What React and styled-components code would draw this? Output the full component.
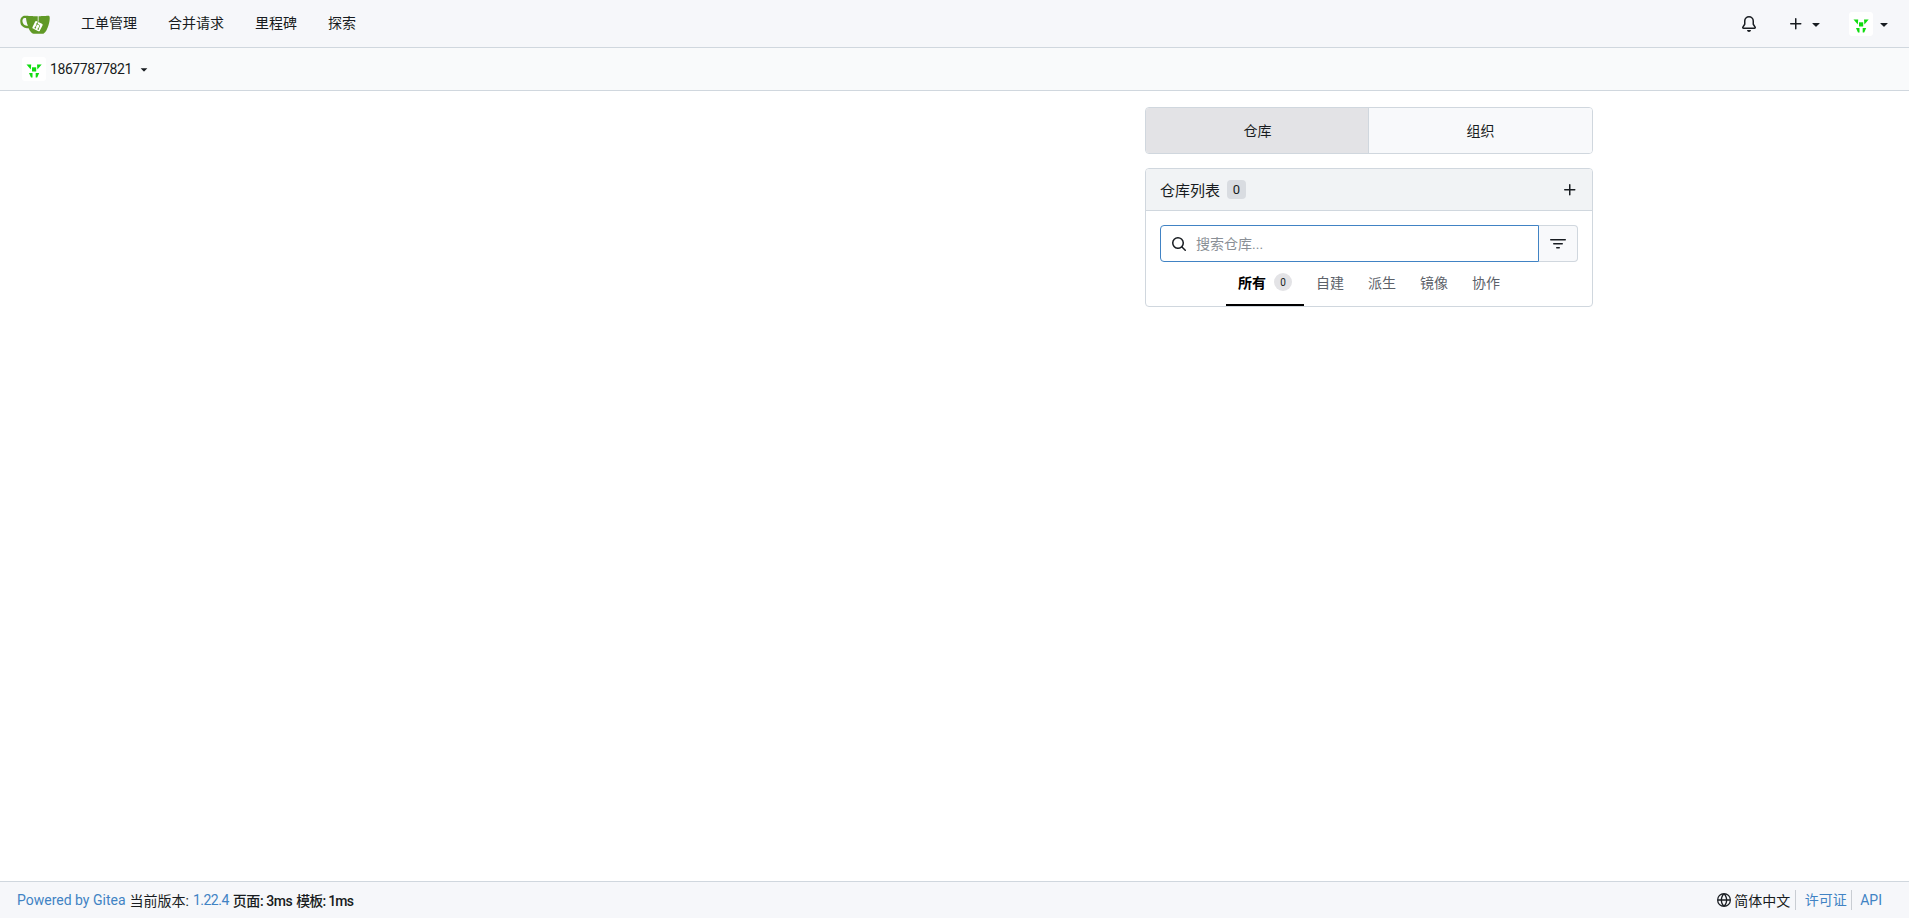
import styled, { createGlobalStyle } from "styled-components";

const GlobalStyle = createGlobalStyle`
  html, body {
    margin: 0;
    padding: 0;
    background: #ffffff;
  }
  body {
    font-family: Roboto, "Noto Sans CJK SC", sans-serif;
    font-size: 14px;
    color: #181c21;
  }
  * {
    box-sizing: border-box;
  }
`;

const paths = {
  bell: "M8 16a2 2 0 0 0 1.985-1.75c.017-.137-.097-.25-.235-.25h-3.5c-.138 0-.252.113-.235.25A2 2 0 0 0 8 16ZM3 5a5 5 0 0 1 10 0v2.947c0 .05.015.098.042.139l1.703 2.555A1.519 1.519 0 0 1 13.482 13H2.518a1.516 1.516 0 0 1-1.263-2.36l1.703-2.554A.255.255 0 0 0 3 7.947Zm5-3.5A3.5 3.5 0 0 0 4.5 5v2.947c0 .346-.102.683-.294.97l-1.703 2.556a.017.017 0 0 0-.003.01l.001.006c0 .002.002.004.004.006l.006.004.007.001h10.964l.007-.001.006-.004.004-.006.001-.007a.017.017 0 0 0-.003-.01l-1.703-2.554a1.745 1.745 0 0 1-.294-.97V5A3.5 3.5 0 0 0 8 1.5Z",
  plus: "M7.75 2a.75.75 0 0 1 .75.75V7h4.25a.75.75 0 0 1 0 1.5H8.5v4.25a.75.75 0 0 1-1.5 0V8.5H2.75a.75.75 0 0 1 0-1.5H7V2.75A.75.75 0 0 1 7.75 2Z",
  search: "M10.68 11.74a6 6 0 0 1-7.922-8.982 6 6 0 0 1 8.982 7.922l3.04 3.04a.749.749 0 0 1-.326 1.275.749.749 0 0 1-.734-.215ZM11.5 7a4.499 4.499 0 1 0-8.997 0A4.499 4.499 0 0 0 11.5 7Z",
  filter: "M.75 3h14.5a.75.75 0 0 1 0 1.5H.75a.75.75 0 0 1 0-1.5ZM3 7.75A.75.75 0 0 1 3.75 7h8.5a.75.75 0 0 1 0 1.5h-8.5A.75.75 0 0 1 3 7.75Zm3 4a.75.75 0 0 1 .75-.75h2.5a.75.75 0 0 1 0 1.5h-2.5a.75.75 0 0 1-.75-.75Z",
  globe: "M8 0a8 8 0 1 1 0 16A8 8 0 0 1 8 0ZM5.78 8.75a9.64 9.64 0 0 0 1.363 4.177c.255.426.542.832.857 1.215.245-.296.551-.705.857-1.215A9.64 9.64 0 0 0 10.22 8.75Zm4.44-1.5a9.64 9.64 0 0 0-1.363-4.177c-.307-.51-.612-.919-.857-1.215a9.927 9.927 0 0 0-.857 1.215A9.64 9.64 0 0 0 5.78 7.25Zm-5.944 1.5H1.543a6.507 6.507 0 0 0 4.666 5.5c-.123-.181-.24-.365-.352-.552-.715-1.192-1.437-2.874-1.581-4.948Zm-2.733-1.5h2.733c.144-2.074.866-3.756 1.58-4.948.12-.197.237-.381.353-.552a6.507 6.507 0 0 0-4.666 5.5Zm10.181 1.5c-.144 2.074-.866 3.756-1.58 4.948-.12.197-.237.381-.353.552a6.507 6.507 0 0 0 4.666-5.5Zm2.733-1.5a6.507 6.507 0 0 0-4.666-5.5c.123.181.24.365.353.552.714 1.192 1.436 2.874 1.58 4.948Z",
  caret: "m4.427 7.427 3.396 3.396a.25.25 0 0 0 .354 0l3.396-3.396A.25.25 0 0 0 11.396 7H4.604a.25.25 0 0 0-.177.427Z",
};

function Icon({ name, size = 16 }) {
  return (
    <svg width={size} height={size} viewBox="0 0 16 16" fill="currentColor" style={{ flexShrink: 0 }}>
      <path d={paths[name]} />
    </svg>
  );
}

function GiteaLogo() {
  return (
    <svg width="30" height="30" viewBox="0 0 640 640">
      <path fill="#fff" d="m395.9 484.2-126.9-61c-12.5-6-17.9-21.2-11.8-33.8l61-126.9c6-12.5 21.2-17.9 33.8-11.8 17.2 8.3 27.1 13 27.1 13l-.1-109.2 16.7-.1.1 117.1s57.4 24.2 83.1 40.1c3.7 2.3 10.2 6.8 12.9 14.4 2.1 6.1 2 13.1-1 19.3l-61 126.9c-6.2 12.7-21.4 18.1-33.9 12" />
      <path fill="#609926" d="M622.7 149.8c-4.1-4.1-9.6-4-9.6-4s-117.2 6.6-177.9 8c-13.3.3-26.5.6-39.6.7v117.2c-5.5-2.6-11.1-5.3-16.6-7.9 0-36.4-.1-109.2-.1-109.2-29 .4-89.2-2.2-89.2-2.2s-141.4-7.1-156.8-8.5c-9.8-.6-22.5-2.1-39 1.5-8.7 1.8-33.5 7.4-53.8 26.9C-4.9 212.4 6.6 276.2 8 285.8c1.7 11.7 6.9 44.2 31.7 72.5 45.8 56.1 144.4 54.8 144.4 54.8s12.1 28.9 30.6 55.5c25 33.1 50.7 58.9 75.7 62 63 0 188.9-.1 188.9-.1s12 .1 28.3-10.3c14-8.5 26.5-23.4 26.5-23.4S547 483 565 451.5c5.5-9.7 10.1-19.1 14.1-28 0 0 55.2-117.1 55.2-231.1-1.1-34.5-9.6-40.6-11.6-42.6M125.6 353.9c-25.9-8.5-36.9-18.7-36.9-18.7S69.6 321.8 60 295.4c-16.5-44.2-1.4-71.2-1.4-71.2s8.4-22.5 38.5-30c13.8-3.7 31-3.1 31-3.1s7.1 59.4 15.7 94.2c7.2 29.2 24.8 77.7 24.8 77.7s-26.1-3.1-43-9.1m300.3 107.6s-6.1 14.5-19.6 15.4c-5.8.4-10.3-1.2-10.3-1.2s-.3-.1-5.3-2.1l-112.9-55s-10.9-5.7-12.8-15.6c-2.2-8.1 2.7-18.1 2.7-18.1L322 273s4.8-9.7 12.2-13c.6-.3 2.3-1 4.5-1.5 8.1-2.1 18 2.8 18 2.8L467.4 315s12.6 5.7 15.3 16.2c1.9 7.4-.5 14-1.8 17.2-6.3 15.4-55 113.1-55 113.1" />
      <path fill="#609926" d="M326.8 380.1c-8.2.1-15.4 5.8-17.3 13.8s2 16.3 9.1 20c7.7 4 17.5 1.8 22.7-5.4 5.1-7.1 4.3-16.9-1.8-23.1l24-49.1c1.5.1 3.7.2 6.2-.5 4.1-.9 7.1-3.6 7.1-3.6 4.2 1.8 8.6 3.8 13.2 6.1 4.8 2.4 9.3 4.9 13.4 7.3.9.5 1.8 1.1 2.8 1.9 1.6 1.3 3.4 3.1 4.7 5.5 1.9 5.5-1.9 14.9-1.9 14.9-2.3 7.6-18.4 40.6-18.4 40.6-8.1-.2-15.3 5-17.7 12.5-2.6 8.1 1.1 17.3 8.9 21.3s17.4 1.7 22.5-5.3c5-6.8 4.6-16.3-1.1-22.6 1.9-3.7 3.7-7.4 5.6-11.3 5-10.4 13.5-30.4 13.5-30.4.9-1.7 5.7-10.3 2.7-21.3-2.5-11.4-12.6-16.7-12.6-16.7-12.2-7.9-29.2-15.2-29.2-15.2s0-4.1-1.1-7.1c-1.1-3.1-2.8-5.1-3.9-6.3 4.7-9.7 9.4-19.3 14.1-29-4.1-2-8.1-4-12.2-6.1-4.8 9.8-9.7 19.7-14.5 29.5-6.7-.1-12.9 3.5-16.1 9.4-3.4 6.3-2.7 14.1 1.9 19.8z" />
    </svg>
  );
}

function Identicon() {
  return (
    <AvatarBox>
      <svg width="24" height="24" viewBox="0 0 24 24" fill="#0fdc0f">
        <rect x="10" y="10.3" width="4.2" height="4.2" />
        <polygon points="4.5,7.5 9.2,7.5 8.8,12.5" />
        <polygon points="19.7,7.5 15,7.5 15.4,12.5" />
        <polygon points="7,16 10.5,16 10.5,20.5 9,20.5" />
        <polygon points="17.2,16 13.7,16 13.7,20.5 15.2,20.5" />
      </svg>
    </AvatarBox>
  );
}

const navItems = ["工单管理", "合并请求", "里程碑", "探索"];
const repoTabs = ["自建", "派生", "镜像", "协作"];

export default function App() {
  return (
    <Page>
      <GlobalStyle />
      <Navbar>
        <NavLeft>
          <LogoLink>
            <GiteaLogo />
          </LogoLink>
          {navItems.map((item) => (
            <NavItem key={item}>{item}</NavItem>
          ))}
        </NavLeft>
        <NavRight>
          <BellItem>
            <Icon name="bell" />
          </BellItem>
          <IconItem $caretGap={4}>
            <Icon name="plus" />
            <Icon name="caret" />
          </IconItem>
          <IconItem $caretGap={3}>
            <Identicon />
            <Icon name="caret" />
          </IconItem>
        </NavRight>
      </Navbar>

      <SecondaryNav>
        <Identicon />
        <UserName>18677877821</UserName>
        <Icon name="caret" size={14} />
      </SecondaryNav>

      <Main>
        <Container>
          <Sidebar>
            <SwitchTabs>
              <SwitchTab $active>仓库</SwitchTab>
              <SwitchTab>组织</SwitchTab>
            </SwitchTabs>

            <RepoBox>
              <BoxHeader>
                <BoxTitle>
                  仓库列表
                  <CountBadge>0</CountBadge>
                </BoxTitle>
                <Icon name="plus" />
              </BoxHeader>
              <BoxBody>
                <SearchRow>
                  <SearchField>
                    <Icon name="search" />
                    <SearchInput placeholder="搜索仓库..." />
                  </SearchField>
                  <FilterButton>
                    <Icon name="filter" />
                  </FilterButton>
                </SearchRow>
                <RepoTabs>
                  <RepoTab $active>
                    所有
                    <TabCount>0</TabCount>
                  </RepoTab>
                  {repoTabs.map((tab) => (
                    <RepoTab key={tab}>{tab}</RepoTab>
                  ))}
                </RepoTabs>
              </BoxBody>
            </RepoBox>
          </Sidebar>
        </Container>
      </Main>

      <Footer>
        <FooterLeft>
          <FooterLink>Powered by Gitea</FooterLink>
          <span>当前版本:</span>
          <VersionLink>1.22.4</VersionLink>
          <Strong $spacing={-0.45}>页面: 3ms</Strong>
          <Strong $spacing={-0.8}>模板: 1ms</Strong>
        </FooterLeft>
        <FooterRight>
          <Language>
            <Icon name="globe" size={14} />
            简体中文
          </Language>
          <FooterLinkItem>许可证</FooterLinkItem>
          <FooterLinkItem>API</FooterLinkItem>
        </FooterRight>
      </Footer>
    </Page>
  );
}

const Page = styled.div`
  min-height: 100vh;
  display: flex;
  flex-direction: column;
`;

const Navbar = styled.nav`
  height: 48px;
  flex-shrink: 0;
  display: flex;
  align-items: center;
  justify-content: space-between;
  padding: 0 17px 0 20px;
  background: #f6f7fa;
  border-bottom: 1px solid #d0d7de;
`;

const NavLeft = styled.div`
  display: flex;
  align-items: center;
`;

const LogoLink = styled.a`
  width: 30px;
  height: 30px;
  margin-right: 15.5px;
  margin-top: 1px;
  display: flex;
`;

const NavItem = styled.a`
  padding: 0 15.5px;
  line-height: 20px;
  margin-bottom: 1px;
  color: #181c21;
`;

const NavRight = styled.div`
  display: flex;
  align-items: center;
  gap: 25px;
`;

const IconItem = styled.a`
  display: flex;
  align-items: center;
  gap: ${(p) => p.$caretGap}px;
  color: #181c21;
`;

const BellItem = styled.a`
  display: flex;
  margin-right: 6px;
  color: #181c21;
`;

const AvatarBox = styled.span`
  width: 24px;
  height: 24px;
  flex-shrink: 0;
  display: block;
  background: #ffffff;
  border-radius: 3px;

  svg {
    display: block;
  }
`;

const SecondaryNav = styled.div`
  height: 43px;
  flex-shrink: 0;
  display: flex;
  align-items: center;
  padding: 0 0 0 22px;
  background: #f9fafb;
  border-bottom: 1px solid #d0d7de;
`;

const UserName = styled.span`
  margin: 0 5px 0 4px;
  letter-spacing: -0.42px;
  color: #181c21;
`;

const Main = styled.main`
  flex: 1;
  padding-top: 16px;
`;

const Container = styled.div`
  width: 1277px;
  margin: 0 auto;
  display: flex;
  justify-content: flex-end;
`;

const Sidebar = styled.aside`
  width: 448px;
  display: flex;
  flex-direction: column;
  gap: 14px;
`;

const SwitchTabs = styled.div`
  height: 47px;
  display: flex;
  border: 1px solid #d0d7de;
  border-radius: 4px;
  overflow: hidden;
`;

const SwitchTab = styled.a`
  flex: 1 1 0;
  display: flex;
  align-items: center;
  justify-content: center;
  padding-bottom: 2px;
  color: #181c21;
  background: ${(p) => (p.$active ? "#e3e3e6" : "#f8f9fb")};

  & + & {
    border-left: 1px solid #d0d7de;
    margin-left: -1px;
  }
`;

const RepoBox = styled.section`
  border: 1px solid #d0d7de;
  border-radius: 4px;
  overflow: hidden;
`;

const BoxHeader = styled.header`
  height: 42px;
  display: flex;
  align-items: center;
  justify-content: space-between;
  padding: 0 14px;
  background: #f1f3f5;
  border-bottom: 1px solid #d0d7de;
`;

const BoxTitle = styled.h4`
  margin: 0;
  display: flex;
  align-items: center;
  gap: 7px;
  font-size: 15px;
  font-weight: 400;
  color: #181c21;
`;

const CountBadge = styled.span`
  width: 19px;
  height: 19px;
  display: flex;
  align-items: center;
  justify-content: center;
  font-size: 13px;
  border-radius: 4px;
  background: #d9dce1;
`;

const BoxBody = styled.div`
  padding: 14px 14px 0;
`;

const SearchRow = styled.div`
  height: 37px;
  display: flex;
`;

const SearchField = styled.label`
  flex: 1;
  display: flex;
  align-items: center;
  gap: 9px;
  padding: 0 10px;
  border: 1px solid #4183c4;
  border-radius: 4px 0 0 4px;
  color: #181c21;
`;

const SearchInput = styled.input`
  flex: 1;
  min-width: 0;
  border: none;
  outline: none;
  padding: 0;
  background: transparent;
  font: inherit;
  color: #181c21;

  &::placeholder {
    color: #8a8f96;
    opacity: 1;
  }
`;

const FilterButton = styled.button`
  width: 39px;
  display: flex;
  align-items: center;
  justify-content: center;
  padding: 0;
  border: 1px solid #d0d7de;
  border-left: none;
  border-radius: 0 4px 4px 0;
  background: #f8f9fb;
  color: #181c21;
`;

const RepoTabs = styled.div`
  height: 44px;
  display: flex;
  justify-content: center;
`;

const RepoTab = styled.a`
  display: flex;
  align-items: center;
  gap: 8px;
  padding: 0 12px 2px;
  border-bottom: 2px solid ${(p) => (p.$active ? "#000000" : "transparent")};
  font-weight: ${(p) => (p.$active ? 700 : 400)};
  color: ${(p) => (p.$active ? "#000000" : "#5c6169")};
`;

const TabCount = styled.span`
  width: 18px;
  height: 18px;
  display: flex;
  align-items: center;
  justify-content: center;
  border-radius: 50%;
  background: #e3e3e6;
  font-size: 10px;
  font-weight: 400;
  color: #181c21;
`;

const Footer = styled.footer`
  height: 37px;
  flex-shrink: 0;
  display: flex;
  align-items: center;
  justify-content: space-between;
  padding: 0 27px 0 17px;
  background: #f6f7fa;
  border-top: 1px solid #d0d7de;
  color: #181c21;
`;

const FooterLeft = styled.div`
  display: flex;
  align-items: center;
  gap: 4px;
`;

const FooterRight = styled.div`
  display: flex;
  align-items: center;
`;

const FooterLink = styled.a`
  color: #4183c4;
`;

const VersionLink = styled(FooterLink)`
  letter-spacing: -0.5px;
`;

const Strong = styled.span`
  font-weight: 500;
  letter-spacing: ${(p) => p.$spacing}px;
`;

const Language = styled.span`
  display: flex;
  align-items: center;
  gap: 3px;
  padding-right: 5px;
`;

const FooterLinkItem = styled.a`
  padding: 0 0 0 8.5px;
  line-height: 20px;
  color: #4183c4;
  border-left: 1px solid #c9cdd3;

  & + & {
    margin-left: 4px;
  }
`;
